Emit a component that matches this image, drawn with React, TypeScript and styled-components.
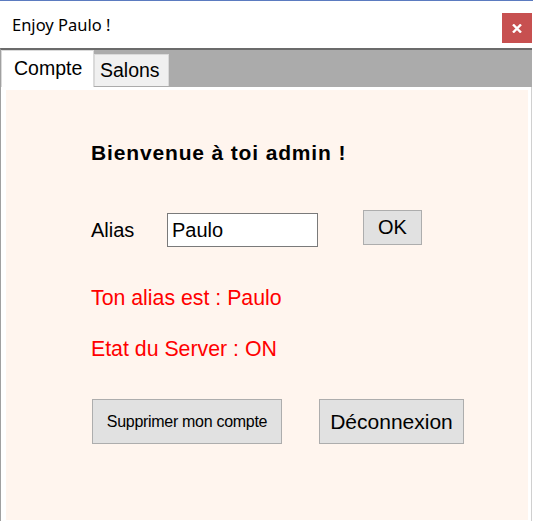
import styled, { createGlobalStyle } from "styled-components";

const GlobalStyle = createGlobalStyle`
  body {
    margin: 0;
    background: #ffffff;
    font-family: "Liberation Sans", Arial, sans-serif;
  }
`;

const Window = styled.div`
  width: 533px;
  height: 521px;
  display: flex;
  flex-direction: column;
  border-top: 1px solid #5b7bc0;
  box-sizing: border-box;
  background: #ffffff;
  overflow: hidden;
`;

const TitleBar = styled.div`
  height: 47px;
  display: flex;
  align-items: flex-start;
  justify-content: space-between;
  padding-left: 12px;
  box-sizing: border-box;
`;

const Title = styled.span`
  font-family: "Noto Sans", "Open Sans", sans-serif;
  font-size: 16.5px;
  line-height: 16px;
  color: #000000;
  margin-top: 16px;
`;

const CloseButton = styled.button`
  width: 30px;
  height: 30px;
  margin-top: 12px;
  margin-right: 1px;
  border: none;
  padding: 0;
  background: #c75050;
  display: flex;
  align-items: center;
  justify-content: center;
`;

const TabControl = styled.div`
  flex: 1;
  display: flex;
  flex-direction: column;
  border-top: 2px solid #6b6b6b;
  border-left: 1px solid #a0a0a0;
  background: #ababab;
  margin-right: 1px;
`;

const TabStrip = styled.div`
  height: 37px;
  display: flex;
  align-items: flex-end;
`;

const Tab = styled.div<{ $active?: boolean; $w: number }>`
  box-sizing: border-box;
  width: ${(p) => p.$w}px;
  height: ${(p) => (p.$active ? "37px" : "32px")};
  margin-bottom: ${(p) => (p.$active ? "0" : "1px")};
  padding: ${(p) => (p.$active ? "8px 0 0 12px" : "6px 0 0 5px")};
  background: ${(p) => (p.$active ? "#ffffff" : "#f0f0f0")};
  border: 1px solid ${(p) => (p.$active ? "#dadada" : "#d9d9d9")};
  border-bottom: none;
  font-size: 19.5px;
  line-height: 19px;
  color: #000000;
  white-space: nowrap;
`;

const PanelFrame = styled.div`
  flex: 1;
  background: #ffffff;
  padding: 3px 3px 1px 5px;
  border-right: 1px solid #d0d0d0;
  display: flex;
`;

const Panel = styled.div`
  flex: 1;
  background: #fff5ee;
  display: flex;
  flex-direction: column;
  align-items: flex-start;
  padding: 52px 0 0 85px;
`;

const Welcome = styled.div`
  font-size: 21px;
  line-height: 21px;
  font-weight: bold;
  letter-spacing: 0.85px;
  color: #000000;
`;

const AliasRow = styled.div`
  display: flex;
  align-items: flex-start;
  margin-top: 47px;
  height: 37px;
`;

const Label = styled.span`
  width: 76px;
  margin-top: 10px;
  font-size: 20px;
  line-height: 20px;
  color: #000000;
`;

const Input = styled.div`
  box-sizing: border-box;
  width: 151px;
  height: 34px;
  margin-top: 3px;
  padding: 6px 0 0 4px;
  background: #ffffff;
  border: 1px solid #7a7a7a;
  font-size: 20px;
  line-height: 20px;
  color: #000000;
`;

const Button = styled.button<{ $w: number; $h: number; $size: number; $spacing?: number }>`
  box-sizing: border-box;
  width: ${(p) => p.$w}px;
  height: ${(p) => p.$h}px;
  padding: 0;
  background: #e1e1e1;
  border: 1px solid #adadad;
  font-family: "Liberation Sans", Arial, sans-serif;
  font-size: ${(p) => p.$size}px;
  letter-spacing: ${(p) => p.$spacing ?? 0}px;
  color: #000000;
  display: flex;
  align-items: center;
  justify-content: center;
`;

const OkButton = styled(Button)`
  margin-left: 45px;
`;

const Status = styled.div<{ $gap: number }>`
  margin-top: ${(p) => p.$gap}px;
  font-size: 21.3px;
  line-height: 21px;
  color: #ff0000;
`;

const ActionRow = styled.div`
  display: flex;
  gap: 37px;
  margin-top: 39px;
  margin-left: 1px;
`;

export default function App() {
  return (
    <>
      <GlobalStyle />
      <Window>
        <TitleBar>
          <Title>Enjoy Paulo !</Title>
          <CloseButton aria-label="Fermer">
            <svg width="10" height="9" viewBox="0 0 10 9">
              <path d="M1 0.5 L9 8.5 M9 0.5 L1 8.5" stroke="#ffffff" strokeWidth="2.4" />
            </svg>
          </CloseButton>
        </TitleBar>
        <TabControl>
          <TabStrip>
            <Tab $active $w={93}>Compte</Tab>
            <Tab $w={75}>Salons</Tab>
          </TabStrip>
          <PanelFrame>
            <Panel>
              <Welcome>Bienvenue à toi admin !</Welcome>
              <AliasRow>
                <Label>Alias</Label>
                <Input>Paulo</Input>
                <OkButton $w={59} $h={35} $size={20}>OK</OkButton>
              </AliasRow>
              <Status $gap={41}>Ton alias est : Paulo</Status>
              <Status $gap={30}>Etat du Server : ON</Status>
              <ActionRow>
                <Button $w={190} $h={45} $size={16} $spacing={-0.3}>
                  Supprimer mon compte
                </Button>
                <Button $w={145} $h={45} $size={21}>
                  Déconnexion
                </Button>
              </ActionRow>
            </Panel>
          </PanelFrame>
        </TabControl>
      </Window>
    </>
  );
}
